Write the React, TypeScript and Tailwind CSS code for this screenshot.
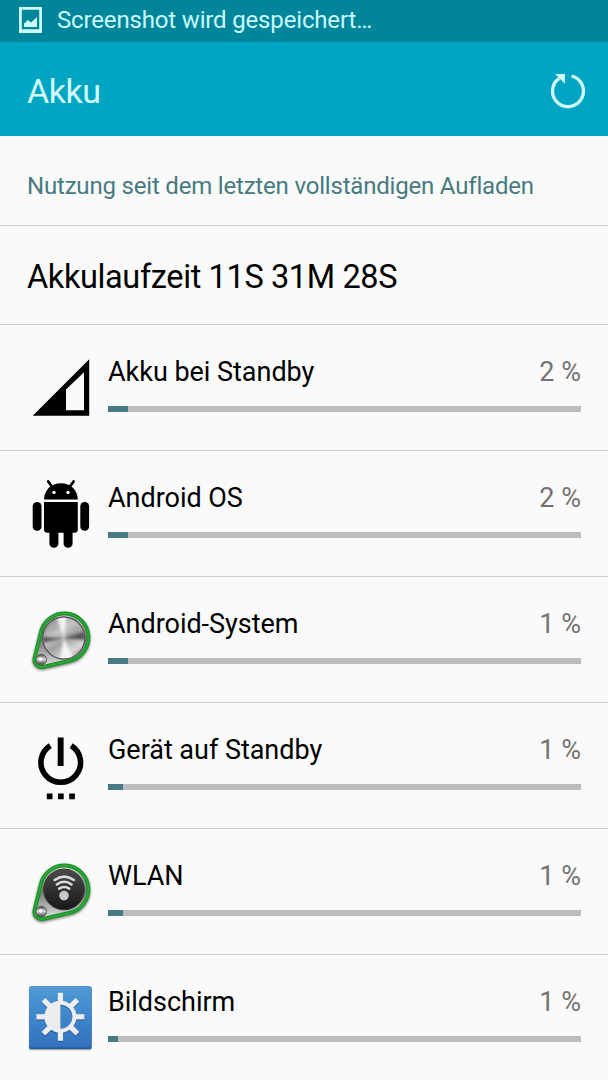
import type { ReactNode } from "react";

const SignalIcon = () => (
  <path
    fill="#000"
    fillRule="evenodd"
    d="M32.7 90.7 89.2 34.3V90.7ZM66 64.5V85.2H84V47.3Z"
  />
);

const AndroidIcon = () => (
  <g fill="#000">
    <path d="M44 48.6C44.3 39 51 32.3 60.9 32.3S77.5 39 77.8 48.6Z" />
    <path
      d="M48.2 30.4 52 35.8M73.6 30.4 69.8 35.8"
      stroke="#000"
      strokeWidth="2.6"
      strokeLinecap="round"
    />
    <circle cx="54" cy="41.4" r="1.7" fill="#fafafa" />
    <circle cx="68" cy="41.4" r="1.7" fill="#fafafa" />
    <path d="M44 51H77.8V78.5Q77.8 81.7 74.6 81.7H47.2Q44 81.7 44 78.5Z" />
    <rect x="32.7" y="51" width="8.8" height="28.8" rx="4.3" />
    <rect x="80.3" y="51" width="8.8" height="28.8" rx="4.3" />
    <rect x="49.4" y="74" width="9" height="22.8" rx="4.4" />
    <rect x="63.6" y="74" width="9" height="22.8" rx="4.4" />
  </g>
);

const PowerIcon = () => (
  <g>
    <path
      d="M50.3 42.6A19.8 19.8 0 1 0 71.2 42.6"
      fill="none"
      stroke="#000"
      strokeWidth="5.6"
    />
    <path
      d="M57.7 34.4H63.6V63H57.7ZM46.8 90.6H52.5V96.2H46.8ZM58 90.6H63.7V96.2H58ZM69.2 90.6H74.9V96.2H69.2Z"
      fill="#000"
    />
  </g>
);

const keyPath =
  "M34.6 81.2 40.9 55.5A24 24 0 1 1 69 84L43.8 89.8A7.4 7.4 0 0 1 34.6 81.2Z";

const KeyFrame = ({ children }: { children: ReactNode }) => (
  <g>
    <defs>
      <filter id="soft" x="-20%" y="-20%" width="140%" height="140%">
        <feGaussianBlur stdDeviation="1.3" />
      </filter>
      <filter id="glow" x="-20%" y="-20%" width="140%" height="140%">
        <feGaussianBlur stdDeviation=".7" />
      </filter>
      <linearGradient id="rim" x1="0" y1="0" x2="0" y2="1">
        <stop offset="0" stopColor="#d8d8d8" />
        <stop offset=".5" stopColor="#777" />
        <stop offset="1" stopColor="#e4e4e4" />
      </linearGradient>
      <linearGradient id="knob" x1="0" y1="0" x2="0" y2="1">
        <stop offset="0" stopColor="#444" />
        <stop offset=".45" stopColor="#ddd" />
        <stop offset="1" stopColor="#3a3a3a" />
      </linearGradient>
    </defs>
    <path
      d={keyPath}
      transform="translate(0 1.2)"
      fill="none"
      stroke="#444"
      strokeOpacity=".6"
      strokeWidth="4.5"
      filter="url(#soft)"
    />
    <path d={keyPath} fill="url(#rim)" />
    <path
      d={keyPath}
      fill="none"
      stroke="#1f942b"
      strokeWidth="4"
      filter="url(#glow)"
    />
    <path d={keyPath} fill="none" stroke="#2fae3a" strokeWidth="1.2" />
    <circle cx="41.3" cy="82.6" r="5.3" fill="url(#knob)" stroke="#555" />
    <circle cx="40.8" cy="82" r="1.8" fill="#fff" />
    {children}
  </g>
);

const SystemIcon = () => (
  <KeyFrame>
    <defs>
      <linearGradient id="metal" x1="0.15" y1="0" x2="0.85" y2="1">
        <stop offset="0" stopColor="#858585" />
        <stop offset=".35" stopColor="#c6c6c6" />
        <stop offset=".55" stopColor="#a2a2a2" />
        <stop offset=".8" stopColor="#d8d8d8" />
        <stop offset="1" stopColor="#8c8c8c" />
      </linearGradient>
      <clipPath id="disc">
        <circle cx="63.8" cy="61" r="20.3" />
      </clipPath>
      <filter id="brush">
        <feGaussianBlur stdDeviation="1.5" />
      </filter>
    </defs>
    <circle
      cx="63.8"
      cy="61"
      r="21"
      fill="url(#metal)"
      stroke="#5d4f5c"
      strokeWidth="1.3"
    />
    <g clipPath="url(#disc)">
      <g filter="url(#brush)">
        <path d="M63.8 61 42 66V60ZM63.8 61 86 54V63Z" fill="#555" />
        <path d="M63.8 61 56 38H67ZM63.8 61 60 84H75Z" fill="#f5f5f5" />
      </g>
    </g>
  </KeyFrame>
);

const WifiIcon = () => (
  <KeyFrame>
    <defs>
      <linearGradient id="dial" x1="0" y1="0" x2="0" y2="1">
        <stop offset="0" stopColor="#4c4c4c" />
        <stop offset="1" stopColor="#171717" />
      </linearGradient>
    </defs>
    <circle cx="64" cy="60.5" r="20.4" fill="url(#dial)" stroke="#3a3a3a" />
    <g fill="none" stroke="#dcdcdc" strokeWidth="2.5" strokeLinecap="round">
      <path d="M54.6 51Q64.2 44.2 73.8 51" />
      <path d="M56.8 55.4Q64.2 50.2 71.6 55.4" />
      <path d="M59.2 59.6Q64.2 56.4 69.2 59.6" />
    </g>
    <circle cx="64" cy="66.6" r="4.8" fill="#c9c9c9" />
  </KeyFrame>
);

const rays = [0, 45, 90, 135, 180, 225, 270, 315];

const DisplayIcon = () => (
  <g>
    <defs>
      <linearGradient id="tile" x1="0" y1="0" x2="0" y2="1">
        <stop offset="0" stopColor="#4f9ad6" />
        <stop offset="1" stopColor="#3173be" />
      </linearGradient>
    </defs>
    <rect x="28.8" y="32" width="63.2" height="63.6" rx="3" fill="#999" fillOpacity=".55" />
    <rect x="29" y="31.3" width="62.6" height="63" rx="2.6" fill="#285b96" />
    <rect x="29" y="31.3" width="62.6" height="61" rx="2.6" fill="url(#tile)" />
    {[
      { dy: 1.2, color: "#275f9e" },
      { dy: 0, color: "#ededf0" },
    ].map(({ dy, color }) => (
      <g key={color} transform={`translate(60.4 ${61.8 + dy})`} fill={color}>
        {rays.map((angle) => (
          <path key={angle} d="M-2.6-24H2.6V-15H-2.6Z" transform={`rotate(${angle})`} />
        ))}
        <path
          fillRule="evenodd"
          d="M0-16A16 16 0 1 0 0 16A16 16 0 1 0 0-16ZM0-12A12 12 0 0 1 0 12Z"
        />
      </g>
    ))}
  </g>
);

const items = [
  { name: "Akku bei Standby", percent: 2, bar: 19.5, icon: <SignalIcon /> },
  { name: "Android OS", percent: 2, bar: 19.5, icon: <AndroidIcon /> },
  { name: "Android-System", percent: 1, bar: 19.5, icon: <SystemIcon /> },
  { name: "Gerät auf Standby", percent: 1, bar: 15, icon: <PowerIcon /> },
  { name: "WLAN", percent: 1, bar: 15, icon: <WifiIcon /> },
  { name: "Bildschirm", percent: 1, bar: 9.5, icon: <DisplayIcon /> },
];

export default function App() {
  return (
    <div className="w-[608px] h-[1080px] overflow-hidden bg-[#fafafa] font-[Roboto,sans-serif] text-black">
      {/* Status bar */}
      <div className="flex h-[42px] items-center bg-[#00859b] pl-[19px] text-[#c9fbff]">
        <svg width="23" height="26" viewBox="0 0 23 26" fill="currentColor" className="mb-0.5">
          <path fillRule="evenodd" d="M0 0H23V26H0ZM2.8 2.8V22.2H20.2V2.8Z" />
          <path d="M5 20V16.5L9 13 12 15.5 18 10V20Z" />
        </svg>
        <span className="ml-[15px] h-[42px] text-[24px] leading-[40px] tracking-[-0.16px]">
          Screenshot wird gespeichert…
        </span>
      </div>

      {/* Title bar */}
      <div className="flex h-[94px] items-center justify-between bg-[#00a5c3] pl-[27px] pr-[22px] pt-[3px] text-[#d2fdff]">
        <h1 className="text-[34px] leading-[40px] tracking-[-0.5px]">Akku</h1>
        <svg width="36" height="36" viewBox="0 0 36 36" fill="none">
          <path
            d="M21.6 3A15.5 15.5 0 1 1 9.2 5.3"
            stroke="currentColor"
            strokeWidth="3.3"
          />
          <path d="M5 .9H15V10.8Z" fill="currentColor" />
        </svg>
      </div>

      <div className="flex h-[90px] items-center border-b border-[#cfcfcf] pl-[27px] pt-[11px]">
        <span className="text-[24px] tracking-[-0.19px] text-[#467a80]">
          Nutzung seit dem letzten vollständigen Aufladen
        </span>
      </div>
      <div className="flex h-[99px] items-center border-b border-[#cfcfcf] pl-[27px] pt-[4px]">
        <span className="text-[32.5px] tracking-[-0.38px]">Akkulaufzeit 11S 31M 28S</span>
      </div>

      {items.map((item) => (
        <div key={item.name} className="flex h-[126px] border-b border-[#cfcfcf] px-[27px]">
          <svg width="81" height="125" viewBox="27 0 81 125" className="shrink-0">
            {item.icon}
          </svg>
          <div className="flex-1 pt-[27px]">
            <div className="flex justify-between text-[27px] leading-[40px]">
              <span className="tracking-[-0.03px]">{item.name}</span>
              <span className="text-[#737373]">{item.percent} %</span>
            </div>
            <div className="mt-[14px] h-[6px] bg-[#bdbdbd]">
              <div className="h-full bg-[#467a84]" style={{ width: item.bar }} />
            </div>
          </div>
        </div>
      ))}
    </div>
  );
}
